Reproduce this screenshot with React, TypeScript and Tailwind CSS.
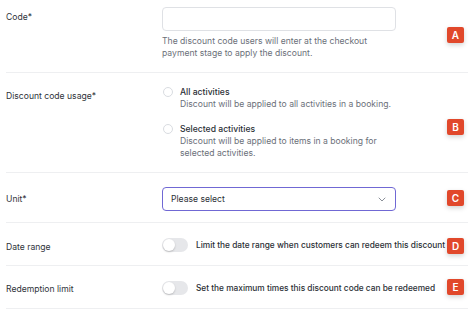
import React from 'react';

function Badge({ letter, top }: { letter: string; top: string }) {
  return (
    <div
      className={`absolute right-[4px] ${top} w-[17px] h-[16px] rounded-[2px] bg-[#e1482b] text-white text-[10px] font-semibold flex items-center justify-center shadow-[0_2px_5px_rgba(0,0,0,0.18)]`}
    >
      {letter}
    </div>
  );
}

function Radio({ title, desc }: { title: string; desc: React.ReactNode }) {
  return (
    <div className="flex items-start gap-[7px]">
      <div className="mt-[1px] ml-[1px] w-[10px] h-[10px] rounded-full border border-[#d9dce1] bg-white shrink-0" />
      <div>
        <div className="text-[8.6px] leading-[12px] font-medium text-[#2b2f36]">{title}</div>
        <div className="text-[8.6px] leading-[12px] text-[#6b7079]">{desc}</div>
      </div>
    </div>
  );
}

function Toggle() {
  return (
    <div className="w-[26px] h-[14px] rounded-full bg-[#e6e7ea] p-[1px] shrink-0">
      <div className="w-[12px] h-[12px] rounded-full bg-white shadow-[0_1px_2px_rgba(0,0,0,0.2)]" />
    </div>
  );
}

export default function App() {
  return (
    <div
      className="w-[474px] h-[316px] bg-white overflow-hidden px-[6px] text-[#2f333a]"
      style={{ fontFamily: 'Inter, "Noto Sans", sans-serif' }}
    >
      {/* Code */}
      <div className="relative flex items-start border-b border-[#eeeff1] pt-[7px] pb-[13px]">
        <div className="w-[156px] shrink-0 pt-[4px] text-[8.6px] leading-[12px]">Code*</div>
        <div className="w-[234px] shrink-0">
          <div className="h-[24px] rounded-[4px] border border-[#dfe1e5] bg-white" />
          <div className="mt-[4px] text-[8.6px] leading-[12px] text-[#6b7079]">
            The discount code users will enter at the checkout
            <br />
            payment stage to apply the discount.
          </div>
        </div>
        <Badge letter="A" top="top-[27px]" />
      </div>

      {/* Usage */}
      <div className="relative flex items-start border-b border-[#eeeff1] pt-[13px] pb-[13px]">
        <div className="w-[156px] shrink-0 pt-[4px] text-[8.6px] leading-[12px]">Discount code usage*</div>
        <div className="flex flex-col gap-[13px]">
          <Radio title="All activities" desc="Discount will be applied to all activities in a booking." />
          <Radio
            title="Selected activities"
            desc={
              <>
                Discount will be applied to items in a booking for
                <br />
                selected activities.
              </>
            }
          />
        </div>
        <Badge letter="B" top="top-[46px]" />
      </div>

      {/* Unit */}
      <div className="relative flex items-center border-b border-[#eeeff1] pt-[14px] pb-[11px]">
        <div className="w-[156px] shrink-0 text-[8.6px] leading-[12px]">Unit*</div>
        <div className="w-[234px] shrink-0 h-[24px] rounded-[4px] border-[1.5px] border-[#7068d4] bg-white flex items-center justify-between pl-[8px] pr-[9px]">
          <span className="text-[8.6px] text-[#2b2f36]">Please select</span>
          <svg width="8" height="5" viewBox="0 0 8 5" fill="none">
            <path d="M1 1l3 3 3-3" stroke="#8a8f98" strokeWidth="1" strokeLinecap="round" strokeLinejoin="round" />
          </svg>
        </div>
        <Badge letter="C" top="top-[17px]" />
      </div>

      {/* Date range */}
      <div className="relative flex items-center border-b border-[#eeeff1] pt-[15px] pb-[13px]">
        <div className="w-[156px] shrink-0 translate-y-[1.5px] text-[8.6px] leading-[14px]">Date range</div>
        <div className="flex items-center gap-[8px]">
          <Toggle />
          <span className="text-[8.3px] leading-[14px] font-medium text-[#2b2f36] whitespace-nowrap">
            Limit the date range when customers can redeem this discount
          </span>
        </div>
        <Badge letter="D" top="top-[15px]" />
      </div>

      {/* Redemption limit */}
      <div className="relative flex items-center border-b border-[#eeeff1] pt-[15px] pb-[13px]">
        <div className="w-[156px] shrink-0 translate-y-[1px] text-[8.6px] leading-[14px]">Redemption limit</div>
        <div className="flex items-center gap-[8px]">
          <Toggle />
          <span className="text-[8.3px] leading-[14px] font-medium text-[#2b2f36] whitespace-nowrap">
            Set the maximum times this discount code can be redeemed
          </span>
        </div>
        <Badge letter="E" top="top-[13px]" />
      </div>
    </div>
  );
}
